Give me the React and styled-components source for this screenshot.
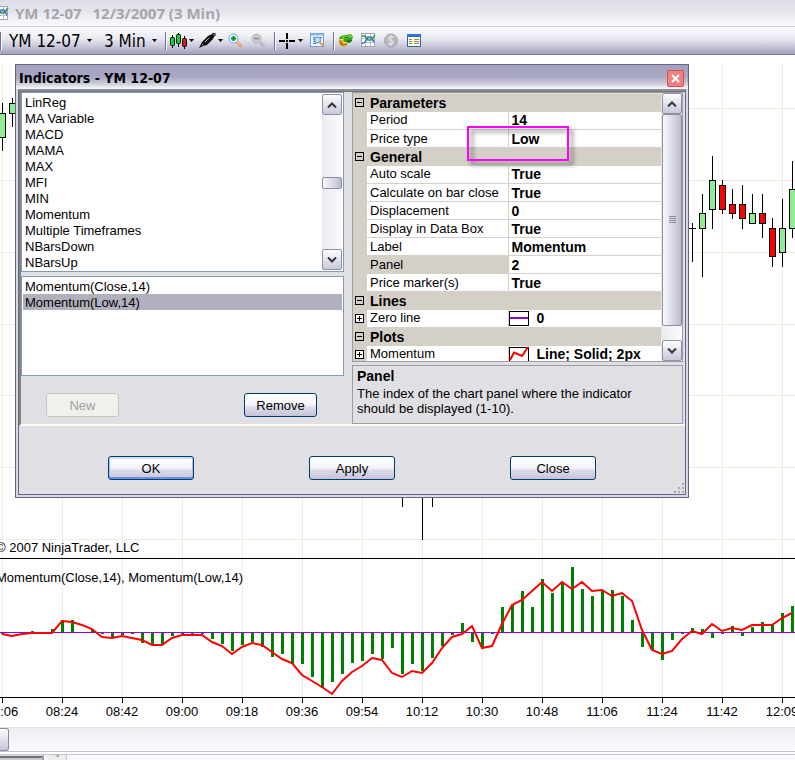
import React, { useState } from 'react';
import styled, { createGlobalStyle, css } from 'styled-components';

const GRID_X = [2, 62, 122, 182, 242, 302, 362, 422, 482, 542, 602, 662, 722, 782];
const GRID_Y = [108, 180, 252, 324, 395, 467, 539];
const TIMES = [
  '08:06', '08:24', '08:42', '09:00', '09:18', '09:36', '09:54',
  '10:12', '10:30', '10:48', '11:06', '11:24', '11:42', '12:09',
];

// [x, high, low, bodyTop, bodyBottom, up]
const CANDLES = [
  [2, 103, 151, 113, 137, true],
  [12, 98, 127, 103, 113, true],
  [692, 223, 262, 228, 228, true],
  [702, 194, 277, 213, 228, true],
  [712, 156, 229, 180, 209, true],
  [722, 180, 214, 185, 209, false],
  [732, 189, 219, 204, 213, false],
  [742, 185, 229, 204, 218, false],
  [752, 194, 223, 213, 223, true],
  [762, 194, 238, 213, 223, false],
  [772, 218, 267, 228, 256, false],
  [782, 199, 267, 228, 252, true],
  [792, 161, 238, 189, 228, true],
];

const TAILS = [[402, 507], [422, 540], [432, 507]];

// momentum of the close (bars) and of the low (line), one value every 10px
const BARS = [
  634, 632, 634, 631, 634, 629, 620, 620, 632, 629, 634, 638, 635, 634, 643,
  645, 645, 636, 634, 634, 634, 639, 644, 651, 645, 642, 647, 657, 654, 664,
  664, 677, 688, 682, 674, 663, 661, 654, 659, 648, 674, 664, 671, 658, 646,
  635, 623, 642, 648, 634, 607, 605, 591, 607, 579, 593, 582, 567, 589, 596,
  590, 590, 596, 620, 647, 650, 660, 640, 634, 628, 629, 638, 634, 626, 636,
  627, 622, 624, 613, 606,
];
const LINE = [
  634, 636, 634, 633, 633, 633, 621, 622, 625, 629, 637, 638, 636, 638, 640,
  645, 645, 638, 635, 635, 635, 642, 646, 654, 647, 643, 645, 652, 659, 663,
  675, 681, 687, 694, 681, 672, 666, 658, 660, 673, 677, 671, 673, 663, 648,
  637, 634, 626, 648, 646, 624, 605, 600, 591, 582, 591, 582, 589, 582, 591,
  590, 596, 593, 601, 630, 650, 654, 651, 639, 631, 634, 624, 631, 628, 630,
  625, 625, 625, 618, 613,
];

const INDICATORS = [
  'LinReg', 'MA Variable', 'MACD', 'MAMA', 'MAX', 'MFI', 'MIN', 'Momentum',
  'Multiple Timeframes', 'NBarsDown', 'NBarsUp',
];
const APPLIED = ['Momentum(Close,14)', 'Momentum(Low,14)'];

const PROPERTIES = [
  { category: 'Parameters' },
  { name: 'Period', value: '14' },
  { name: 'Price type', value: 'Low' },
  { category: 'General' },
  { name: 'Auto scale', value: 'True' },
  { name: 'Calculate on bar close', value: 'True' },
  { name: 'Displacement', value: '0' },
  { name: 'Display in Data Box', value: 'True' },
  { name: 'Label', value: 'Momentum' },
  { name: 'Panel', value: '2', selected: true },
  { name: 'Price marker(s)', value: 'True' },
  { category: 'Lines' },
  { name: 'Zero line', value: '0', swatch: 'flat' },
  { category: 'Plots' },
  { name: 'Momentum', value: 'Line; Solid; 2px', swatch: 'zigzag' },
];

export default function App() {
  return (
    <>
      <GlobalStyle />
      <Page>
        <TitleBar>
          <ChartIcon />
          <h1>
            <span>YM 12-07</span> <span>12/3/2007 (3 Min)</span>
          </h1>
        </TitleBar>
        <Toolbar />
        <Chart />
        <ChartScroll>
          <ChartThumb />
        </ChartScroll>
        <BottomTabs>
          <TabEdge />
          <TabArrow>
            <svg width='8' height='4'>
              <path d='M2 0h4v2h-2z' fill='#aaa' />
            </svg>
          </TabArrow>
        </BottomTabs>
        <IndicatorsDialog />
      </Page>
    </>
  );
}

function Toolbar() {
  return (
    <StyledToolbar>
      <Separator />
      <Picker>
        <select aria-label='Instrument'>
          <option>YM 12-07</option>
        </select>
        <Caret />
      </Picker>
      <Picker>
        <select aria-label='Interval'>
          <option>3 Min</option>
        </select>
        <Caret />
      </Picker>
      <Separator />
      <ToolButton aria-label='Chart style'>
        <svg width='17' height='16'>
          <path d='M2.500 2v13M8.500 0v14M14.500 3v13' stroke='#000' />
          <rect x='0.500' y='4.500' width='4' height='8' rx='1' fill='#0d2' stroke='#000' />
          <rect x='6.500' y='1.500' width='4' height='9' rx='1' fill='#0d2' stroke='#000' />
          <rect x='12.500' y='5.500' width='4' height='8' rx='1' fill='#e11' stroke='#000' />
        </svg>
        <Caret />
      </ToolButton>
      <ToolButton aria-label='Drawing tools'>
        <svg width='17' height='16'>
          <path d='M0 15L3 9L9 3L13 1L16 2L14 6L8 12L4 13Z' fill='#111' />
          <path d='M13 1L16 0L16 3' stroke='#111' fill='none' />
          <path d='M6 9L10 5M3 12L4 11' stroke='#bbb' />
        </svg>
        <Caret />
      </ToolButton>
      <ToolButton aria-label='Zoom in' $pad='3px'>
        <Magnifier plus />
      </ToolButton>
      <ToolButton aria-label='Zoom out' $pad='3px' disabled>
        <Magnifier />
      </ToolButton>
      <Separator />
      <ToolButton aria-label='Crosshair' $pad='2px'>
        <svg width='17' height='16' shapeRendering='crispEdges'>
          <path d='M8 0v6M8 10v6M0 8h6M10 8h6' stroke='#000' strokeWidth='2' />
          <rect x='7' y='7' width='2' height='2' />
        </svg>
        <Caret />
      </ToolButton>
      <ToolButton aria-label='Show data box' $pad='3px'>
        <svg width='15' height='15'>
          <rect x='0.500' y='0.500' width='13' height='13' fill='#eef6ff' stroke='#6f9fd6' />
          <path d='M1 1.500h12' stroke='#8fb8ea' strokeWidth='2' />
          <path d='M3 4.500h2M3 6.500h2M3 8.500h2M3 10.500h3M10 4.500h2' stroke='#5c7896' />
          <circle cx='7.500' cy='7' r='3' fill='#bfe2fb' stroke='#5688b8' />
          <path d='M10 9.500l3.500 3.500' stroke='#e8904c' strokeWidth='2' />
        </svg>
      </ToolButton>
      <Separator />
      <ToolButton aria-label='Account' $pad='2px'>
        <svg width='16' height='15'>
          <path d='M3 3L13 1L15 4L13 9L5 10L1 5Z' fill='#35a51c' />
          <path d='M4 4L13 2L14 4L6 6Z' fill='#82da45' />
          <path d='M6 5L11 4' stroke='#0b6a0b' />
          <path d='M9 7h5v1l-3 2l-2-1z' fill='#157d12' />
          <path d='M1 6h5v3h3v4l-4 1l-4-3z' fill='#e6ac25' />
          <path d='M1 8l3 2l4-1M2 11l3 1l4-1' stroke='#956411' fill='none' />
          <path d='M2 6.500h3M5 9.500h3' stroke='#ffe784' />
        </svg>
      </ToolButton>
      <ToolButton aria-label='Indicators' $pad='3px'>
        <ChartIcon />
      </ToolButton>
      <ToolButton aria-label='Strategies' $pad='3px' disabled>
        <svg width='15' height='15'>
          <circle cx='7' cy='7.500' r='6.500' fill='#b7b7bd' stroke='#a5a5ad' />
          <path
            d='M10 4.500Q7 2.500 5 4.500Q4 7 7 7.500Q10 8 9 10Q7 12 4 10.500M7 2v11'
            stroke='#dcdce0'
            strokeWidth='1.500'
            fill='none'
          />
        </svg>
      </ToolButton>
      <ToolButton aria-label='Properties' $pad='3px'>
        <svg width='15' height='15'>
          <rect x='0.500' y='1.500' width='13' height='12' fill='#fffbd8' stroke='#33669f' />
          <path d='M0 2.500h14' stroke='#2f72d8' strokeWidth='3' />
          <path d='M2 6.500h3M2 8.500h3M2 10.500h3M7 6.500h5M7 8.500h5M7 10.500h5' stroke='#888c78' />
        </svg>
      </ToolButton>
    </StyledToolbar>
  );
}

function Caret() {
  return (
    <svg width='5' height='3' aria-hidden='true'>
      <path d='M0 0h5L2.500 3z' fill='#000' />
    </svg>
  );
}

function Magnifier({ plus }) {
  return (
    <svg width='15' height='15'>
      <path d='M9 9l4.500 4.500' stroke={plus ? '#e8945c' : '#b4b4b8'} strokeWidth='3' />
      <path d='M9 8.500l4 4' stroke={plus ? '#ffd09c' : '#d4d4d8'} />
      <circle
        cx='5.500'
        cy='5.500'
        r='4.500'
        fill={plus ? '#d8f4fa' : '#ccccd0'}
        stroke={plus ? '#76b0da' : '#b4b4ba'}
      />
      {plus ? (
        <path d='M5.500 3v5M3 5.500h5' stroke='#0a8a1a' strokeWidth='2' />
      ) : (
        <path d='M3 5.500h5' stroke='#98989c' strokeWidth='2' />
      )}
    </svg>
  );
}

function ChartIcon() {
  return (
    <svg width='15' height='15' aria-hidden='true'>
      <rect x='0.500' y='0.500' width='13' height='13' fill='#fff' stroke='#9ca2c0' />
      <path d='M4.500 1v12M9.500 1v12M1 5.500h12M1 9.500h12' stroke='#b4b8d0' />
      <path d='M1 3h3l3 4h3l4-5' stroke='#28a028' strokeWidth='1.500' fill='none' />
      <path d='M1 11l3-2l3-5l3 0l3 5' stroke='#3c70c8' strokeWidth='1.500' fill='none' />
    </svg>
  );
}

function Chart() {
  const points = LINE.map((y, i) => `${2 + i * 10},${y}`).join(' ');

  return (
    <StyledChart>
      <svg width='100%' height='672' shapeRendering='crispEdges'>
        {/* data is kept in window coordinates, the plot starts under the toolbar */}
        <g transform='translate(0 -55)'>
          {GRID_X.map((x) => (
            <rect key={x} x={x} y='64' width='1' height='633' fill='#eeeee0' />
          ))}
          {GRID_Y.map((y) => (
            <rect key={y} x='0' y={y} width='100%' height='1' fill='#eeeee0' />
          ))}

          {CANDLES.map(([x, high, low, top, bottom, up]) => (
            <g key={x}>
              <rect x={x} y={high} width='1' height={low - high} />
              <rect x={x - 3} y={top} width='7' height={bottom - top + 1} />
              {bottom > top && (
                <rect
                  x={x - 2}
                  y={top + 1}
                  width='5'
                  height={bottom - top - 1}
                  fill={up ? '#90ee90' : '#f00'}
                />
              )}
            </g>
          ))}
          {TAILS.map(([x, low]) => (
            <rect key={x} x={x} y='480' width='1' height={low - 480} />
          ))}

          <rect x='0' y='558' width='100%' height='1' />
          {BARS.map((y, i) => (
            <rect
              key={i}
              x={1 + i * 10}
              y={Math.min(y, 632)}
              width='3'
              height={Math.abs(y - 632)}
              fill='#008000'
            />
          ))}
          <rect x='0' y='632' width='100%' height='1' fill='#9400d3' />
          <polyline
            points={points}
            fill='none'
            stroke='#f00'
            strokeWidth='2'
            shapeRendering='auto'
          />

          <rect x='0' y='697' width='100%' height='1' />
          {GRID_X.map((x, i) => (
            <g key={x}>
              <rect x={x} y='697' width='1' height='6' />
              <text x={x} y='716' textAnchor='middle'>
                {TIMES[i]}
              </text>
            </g>
          ))}
          <text x='-4' y='552'>© 2007 NinjaTrader, LLC</text>
          <text x='-4' y='582'>Momentum(Close,14), Momentum(Low,14)</text>
        </g>
      </svg>
    </StyledChart>
  );
}

function IndicatorsDialog() {
  const [applied, setApplied] = useState(APPLIED[1]);

  return (
    <Dialog role='dialog' aria-labelledby='dialog-title'>
      <DialogTitle>
        <h2 id='dialog-title'>Indicators - YM 12-07</h2>
        <CloseBox aria-label='Close window'>
          <svg width='9' height='9'>
            <path d='M1 1l7 7M8 1l-7 7' stroke='#fff' strokeWidth='2' />
          </svg>
        </CloseBox>
      </DialogTitle>
      <DialogBody>
        <Columns>
          <Lists>
            <ListFrame $height='180px'>
              <List role='listbox' aria-label='Available indicators'>
                {INDICATORS.map((name) => (
                  <Item key={name} role='option' aria-selected='false'>
                    {name}
                  </Item>
                ))}
              </List>
              <ScrollBar before={62} thumb={12} />
            </ListFrame>
            <ListFrame $height='100px'>
              <List role='listbox' aria-label='Applied indicators'>
                {APPLIED.map((name) => (
                  <Item
                    key={name}
                    role='option'
                    aria-selected={name === applied}
                    $selected={name === applied}
                    onClick={() => setApplied(name)}
                  >
                    {name}
                  </Item>
                ))}
              </List>
            </ListFrame>
            <ListActions>
              <Button $width='73px' disabled>
                New
              </Button>
              <Button $width='73px'>Remove</Button>
            </ListActions>
          </Lists>
          <Properties>
            <PropertyGrid />
            <Help>
              <strong>Panel</strong>
              <p>The index of the chart panel where the indicator should be displayed (1-10).</p>
            </Help>
          </Properties>
        </Columns>
        <Footer>
          <Button $width='86px' $primary>
            OK
          </Button>
          <Button $width='86px'>Apply</Button>
          <Button $width='86px'>Close</Button>
        </Footer>
        <Grip width='11' height='11' aria-hidden='true'>
          <path d='M8 0h2v2h-2zM4 4h2v2h-2zM8 4h2v2h-2zM0 8h2v2h-2zM4 8h2v2h-2zM8 8h2v2h-2z' />
        </Grip>
      </DialogBody>
    </Dialog>
  );
}

function PropertyGrid() {
  return (
    <GridFrame>
      <GridScroll>
        <Table>
          <colgroup>
            <col width='14' />
            <col width='141' />
            <col />
          </colgroup>
          <tbody>
            {PROPERTIES.map(({ category, name, value, swatch, selected }) =>
              category ? (
                <tr key={category}>
                  <Gutter>
                    <Toggle open label={category} />
                  </Gutter>
                  <Category colSpan='2'>{category}</Category>
                </tr>
              ) : (
                <tr key={name + value}>
                  <Gutter>{swatch && <Toggle label={name} />}</Gutter>
                  <Name $selected={selected}>{name}</Name>
                  <Value>
                    <ValueRow>
                      {swatch && <Swatch kind={swatch} />}
                      {selected ? <input aria-label={name} defaultValue={value} /> : value}
                    </ValueRow>
                  </Value>
                </tr>
              )
            )}
          </tbody>
        </Table>
      </GridScroll>
      <ScrollBar before={0} thumb={212} />
      <Highlight />
    </GridFrame>
  );
}

function Toggle({ open, label }) {
  return (
    <ToggleButton aria-label={label} aria-expanded={!!open}>
      <svg width='9' height='9' shapeRendering='crispEdges'>
        <rect x='0.500' y='0.500' width='8' height='8' fill={open ? 'none' : '#fff'} stroke='#000' />
        <path d={open ? 'M2 4.500h5' : 'M2 4.500h5M4.500 2v5'} stroke='#000' />
      </svg>
    </ToggleButton>
  );
}

function Swatch({ kind }) {
  return (
    <svg width='20' height='15' aria-hidden='true'>
      <rect x='0.500' y='0.500' width='19' height='14' fill='#fff' stroke='#000' />
      {kind === 'flat' ? (
        <path d='M1 7h18' stroke='#9400d3' strokeWidth='2' />
      ) : (
        <path d='M1 13L5 5.500L13 9L19 0' stroke='#f00' strokeWidth='2' fill='none' />
      )}
    </svg>
  );
}

function ScrollBar({ before, thumb }) {
  return (
    <Track>
      <ArrowButton aria-label='Scroll up'>
        <svg width='10' height='6'>
          <path d='M1 5.500L5 1.500L9 5.500' stroke='#333' strokeWidth='2' fill='none' />
        </svg>
      </ArrowButton>
      <Lane $before={`${before}px`}>
        <Thumb style={{ height: thumb }}>
          {thumb > 40 && (
            <svg width='7' height='8' shapeRendering='crispEdges'>
              <path d='M0 0.500h7M0 2.500h7M0 4.500h7M0 6.500h7' stroke='#8c8ca0' />
            </svg>
          )}
        </Thumb>
      </Lane>
      <ArrowButton aria-label='Scroll down'>
        <svg width='10' height='6'>
          <path d='M1 0.500L5 4.500L9 0.500' stroke='#333' strokeWidth='2' fill='none' />
        </svg>
      </ArrowButton>
    </Track>
  );
}

const GlobalStyle = createGlobalStyle`
  * {
    box-sizing: border-box;
  }

  body {
    margin: 0;
    background: #fff;
    color: #000;
    font-family: 'Liberation Sans', Arial, sans-serif;
    font-size: 13px;
    overflow: hidden;
  }

  h1, h2, p, ul {
    margin: 0;
    padding: 0;
  }

  button, input, select {
    font: inherit;
    color: inherit;
    margin: 0;
    padding: 0;
    border: 0;
    background: none;
  }

  svg {
    display: block;
    flex: none;
  }
`;

const Page = styled.main`
  position: relative;
  display: flex;
  flex-direction: column;
  min-height: 100vh;
  overflow: hidden;
`;

const TitleBar = styled.header`
  display: flex;
  align-items: center;
  gap: 6px;
  height: 27px;
  margin-left: -6px;
  border-bottom: 1px solid #c6c6d2;
  background: linear-gradient(#dcdce4, #e4e4ec 40%, #fafafc);

  h1 {
    display: flex;
    gap: 11px;
    color: #a5a5a9;
    font: bold 15px 'Open Sans', sans-serif;
    white-space: nowrap;
  }
`;

const StyledToolbar = styled.nav`
  display: flex;
  align-items: center;
  gap: 5px;
  height: 28px;
  border-bottom: 1px solid #7c7c9c;
  background: linear-gradient(#fafaff, #ececf4 40%, #d0d0e0 65%, #a4a2be);
`;

const Separator = styled.span`
  width: 2px;
  height: 18px;
  margin-right: -2px;
  border-left: 1px solid #70709a;
  border-right: 1px solid #fff;
`;

const Picker = styled.label`
  display: flex;
  align-items: center;
  gap: 6px;
  padding: 0 3px 0 4px;

  select {
    appearance: none;
    font: 17px 'DejaVu Sans Condensed', 'DejaVu Sans', sans-serif;
  }
`;

const ToolButton = styled.button`
  display: flex;
  align-items: center;
  gap: 2px;
  height: 20px;
  padding-right: ${({ $pad }) => $pad || '0'};
`;

const StyledChart = styled.section`
  background: #fff;

  text {
    font-size: 13px;
  }
`;

const ChartScroll = styled.div`
  height: 25px;
  border-top: 1px solid #e0e0e8;
  border-bottom: 1px solid #c4c4d6;
  background: linear-gradient(#ececf2, #fcfcff);
`;

const ChartThumb = styled.div`
  width: 9px;
  height: 23px;
  border: 1px solid #8888a0;
  border-left: 0;
  border-radius: 0 3px 3px 0;
  background: linear-gradient(#fff, #c4c4d8);
`;

const BottomTabs = styled.div`
  display: flex;
  gap: 3px;
  flex: 1;
  margin-top: 2px;
  border-top: 1px solid #c4c4d6;
  background: #fafafe;
`;

const TabEdge = styled.span`
  width: 44px;
  border-top: 1px solid #ddd;
  border-right: 2px solid #9c9cac;
  background: linear-gradient(#707070 2px, #c8c8d0 2px);
`;

const TabArrow = styled.span`
  display: flex;
  justify-content: center;
  width: 20px;
  border-right: 1px solid #c8c8b8;
  background: #ececec;
`;

const Dialog = styled.div`
  position: absolute;
  top: 64px;
  left: 15px;
  width: 674px;
  max-width: calc(100% - 30px);
  border: 1px solid #66668a;
  background: #d8d8e2;
`;

const DialogTitle = styled.div`
  display: flex;
  align-items: center;
  justify-content: space-between;
  height: 24px;
  padding: 2px 4px 0 3px;
  background: linear-gradient(#a3a1bf, #a9a7c3 50%, #c8c8d8 75%, #fafafc);

  h2 {
    font: bold 14px 'DejaVu Sans Condensed', 'DejaVu Sans', sans-serif;
  }
`;

const CloseBox = styled.button`
  display: grid;
  place-items: center;
  width: 17px;
  height: 17px;
  border: 1px solid #d05050;
  border-radius: 2px;
  background: #f08080;
`;

const DialogBody = styled.div`
  position: relative;
  margin: 0 2px 2px;
  border: 1px solid #66668a;
  border-top: 2px solid #8c8c9c;
  background: #e0dfe3;
`;

const Columns = styled.div`
  display: flex;
  gap: 8px;
  padding-right: 2px;
  border-top: 1px solid #747470;
  border-left: 2px solid #80807c;
  border-bottom: 2px solid #fcfcf4;
`;

const Lists = styled.div`
  flex: 1;
  display: flex;
  flex-direction: column;
  gap: 4px;
`;

const ListFrame = styled.div`
  display: flex;
  height: ${({ $height }) => $height};
  padding: 1px;
  border: 1px solid #7f9db9;
  background: #fff;
`;

const List = styled.ul`
  flex: 1;
  list-style: none;
`;

const Item = styled.li`
  height: 16px;
  padding-left: 2px;
  line-height: 18px;
  background: ${({ $selected }) => ($selected ? '#b1b1bd' : 'transparent')};
`;

const ListActions = styled.div`
  display: flex;
  justify-content: space-between;
  padding: 13px 27px 6px 25px;
`;

const Button = styled.button`
  width: ${({ $width }) => $width};
  height: 24px;
  border: 1px solid #003c74;
  border-radius: 3px;
  background: linear-gradient(#fff, #f4f4fa 50%, #dcdcea 60%, #c4c4d8);

  ${({ $primary }) =>
    $primary &&
    css`
      box-shadow: inset 0 2px #cce0fc, inset 0 -2px #6a8ee4, inset 1px 0 #a8c0f0,
        inset -1px 0 #a8c0f0;
    `}

  &:disabled {
    border-color: #c9c7ba;
    background: #f0f0ec;
    color: #a1a1a4;
  }
`;

const Properties = styled.div`
  display: flex;
  flex-direction: column;
  gap: 3px;
  width: 331px;
`;

const GridFrame = styled.div`
  position: relative;
  display: flex;
  height: 270px;
  border: 1px solid #9c9ca4;
  background: #d4d0c8;
`;

const GridScroll = styled.div`
  flex: 1;
  overflow: hidden;
  border-right: 1px solid #ece9e0;
`;

const Table = styled.table`
  width: 100%;
  table-layout: fixed;
  border-collapse: collapse;

  td,
  th {
    height: 18px;
    padding: 0;
    font-weight: normal;
    text-align: left;
    white-space: nowrap;
    line-height: 16px;
  }
`;

const Gutter = styled.td`
  background: #d4d0c8;
`;

const Category = styled.td`
  && {
    padding-left: 3px;
    border-top: 1px solid #dedbd4;
    font-size: 14px;
    font-weight: bold;
  }
`;

const Name = styled.th`
  && {
    padding-left: 3px;
    border-bottom: 1px solid #d4d0c8;
    border-right: 1px solid #d4d0c8;
    background: ${({ $selected }) => ($selected ? '#d4d0c8' : '#fff')};
  }
`;

const Value = styled.td`
  && {
    border-bottom: 1px solid #d4d0c8;
    background: #fff;
    font-size: 14px;
    font-weight: bold;
  }

  input {
    width: 100%;
    height: 16px;
  }
`;

const ValueRow = styled.div`
  display: flex;
  align-items: center;
  gap: 8px;
  height: 17px;
  padding-left: 3px;

  svg {
    margin-left: -3px;
  }
`;

const ToggleButton = styled.button`
  display: block;
  width: 9px;
  height: 9px;
  margin-left: 2px;
`;

const Track = styled.div`
  display: flex;
  flex-direction: column;
  width: 20px;
  padding: 0;
  background: linear-gradient(90deg, #eaeaf0, #fcfcff);
`;

const ArrowButton = styled.button`
  display: grid;
  place-items: center;
  height: 21px;
  border: 1px solid #9090a4;
  border-radius: 2px;
  background: linear-gradient(#fdfdff, #c8c8da);
`;

const Lane = styled.div`
  flex: 1;
  padding-top: ${({ $before }) => $before};
`;

const Thumb = styled.div`
  display: grid;
  place-items: center;
  border: 1px solid #8c8ca0;
  border-radius: 2px;
  background: linear-gradient(90deg, #f8f8fc, #dcdce8 50%, #bcbcd0);
`;

const Highlight = styled.div`
  position: absolute;
  top: 33px;
  left: 114px;
  width: 102px;
  height: 35px;
  border: 2px solid #f0f;
  filter: drop-shadow(4px 4px 2px rgba(0, 0, 0, 0.5));
  pointer-events: none;
`;

const Help = styled.div`
  height: 59px;
  padding: 3px 40px 0 4px;
  border: 1px solid #9c9ca4;
  line-height: 15px;

  strong {
    display: block;
    margin-bottom: 2px;
    font-size: 14px;
  }
`;

const Footer = styled.div`
  display: flex;
  justify-content: space-between;
  padding: 30px 89px 14px;
`;

const Grip = styled.svg`
  position: absolute;
  right: 0;
  bottom: 0;
  fill: #b0ae9c;
`;
